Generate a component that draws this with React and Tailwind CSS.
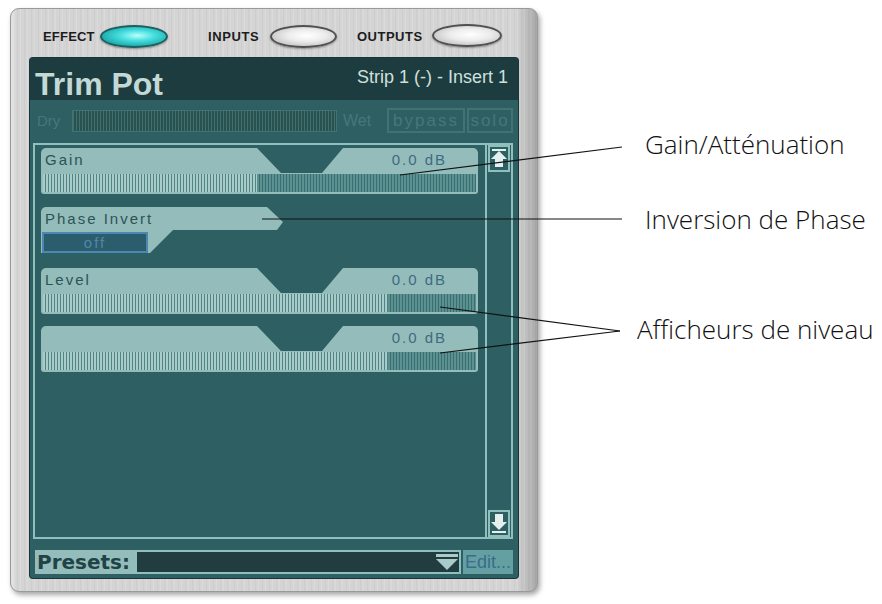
import React from "react";

const LIB = "font-['Liberation_Sans',Arial,sans-serif]";

function ScrollArrow({ dir }) {
  return (
    <div className="ml-[1px] w-[22px] h-[27px] border-2 border-[#8fc0be] flex items-center justify-center">
      <svg width="16" height="21" viewBox="0 0 16 21">
        {dir === "up" ? (
          <g fill="#e4efee">
            <rect x="1" y="1" width="14" height="2" />
            <polygon points="8,3 16,11 0,11" />
            <rect x="4" y="11" width="8" height="8" />
          </g>
        ) : (
          <g fill="#e4efee">
            <rect x="4" y="1" width="8" height="8" />
            <polygon points="0,9 16,9 8,17" />
            <rect x="1" y="18" width="14" height="2" />
          </g>
        )}
      </svg>
    </div>
  );
}

function Meter({ split }) {
  return (
    <div className="h-[21px] bg-[#94bcba] px-[2px] pt-[1px] pb-[2px] rounded-b-[3px] flex">
      <div
        className="h-full bg-[image:repeating-linear-gradient(90deg,#a9ccc9_0px,#a9ccc9_2px,#4f8385_2px,#4f8385_3px)]"
        style={{ width: split }}
      />
      <div className="h-full flex-1 bg-[image:repeating-linear-gradient(90deg,#5c9192_0px,#5c9192_2px,#3b6e70_2px,#3b6e70_3px)]" />
    </div>
  );
}

function SliderModule({ label, value, split, className = "" }) {
  return (
    <div className={`w-[437px] flex flex-col ${className}`}>
      <div
        className={`h-[25px] bg-[#94bcba] rounded-t-[5px] [clip-path:polygon(0_0,216px_0,240px_100%,281px_100%,302px_0,100%_0,100%_100%,0_100%)] flex justify-between items-start pt-[4px] pl-[4px] pr-[31px] text-[15px] leading-none tracking-[2px] ${LIB}`}
      >
        <span className="text-[#2c5356]">{label}</span>
        <span className="text-[#3f6b80]">{value}</span>
      </div>
      <Meter split={split} />
    </div>
  );
}

function PhaseModule() {
  return (
    <div
      className={`mt-[13px] w-[242px] h-[46px] bg-[#94bcba] rounded-tl-[5px] [clip-path:polygon(0_0,226px_0,242px_15px,236px_23px,132px_23px,109px_100%,0_100%)] flex flex-col ${LIB}`}
    >
      <div className="h-[25px] pt-[4px] pl-[4px] text-[15px] leading-none tracking-[2px] text-[#2c5356]">
        Phase Invert
      </div>
      <div className="ml-[1px] w-[106px] h-[21px] bg-[#2c5d6c] border-2 border-[#4a87b3] flex items-center justify-center text-[15px] leading-none tracking-[2px] text-[#4d88aa]">
        off
      </div>
    </div>
  );
}

function Oval({ active, className = "" }) {
  return (
    <div
      className={`h-[23px] rounded-[50%] border-2 shadow-[0_1px_2px_rgba(0,0,0,0.35)] ${
        active
          ? "border-[#1f5d5f] bg-[image:radial-gradient(ellipse_at_55%_45%,#b8ffff_0%,#47dede_35%,#1aa9ab_75%,#0f6f72_100%)]"
          : "border-[#505050] bg-[image:radial-gradient(ellipse_at_55%_45%,#ffffff_0%,#ececec_40%,#c4c4c4_78%,#8c8c8c_100%)]"
      } ${className}`}
    />
  );
}

export default function App() {
  return (
    <div className="relative w-[882px] h-[604px] bg-white overflow-hidden flex items-start">
      {/* Plugin window */}
      <div className="mt-[8px] ml-[10px] w-[528px] h-[584px] rounded-[9px] border border-[#9a9a9a] bg-[#d6d6d6] bg-[image:linear-gradient(90deg,rgba(255,255,255,0.35)_0px,rgba(255,255,255,0)_6px,rgba(0,0,0,0)_505px,rgba(0,0,0,0.22)_527px),repeating-linear-gradient(90deg,#dadada_0px,#cdcdcd_1px,#dedede_2px,#d0d0d0_4px,#d8d8d8_5px,#cacaca_7px)] shadow-[2px_3px_5px_rgba(0,0,0,0.35)] flex flex-col px-[19px] pb-[13px]">
        {/* header */}
        <div className={`h-[49px] flex items-start shrink-0 ${LIB}`}>
          <span className="mt-[21px] ml-[13px] w-[50px] text-[13px] leading-none font-bold text-[#1c1c1c] tracking-[0.2px]">
            EFFECT
          </span>
          <Oval active className="mt-[16px] ml-[7px] w-[68px]" />
          <span className="mt-[21px] ml-[40px] w-[52px] text-[13px] leading-none font-bold text-[#1c1c1c] tracking-[0.6px]">
            INPUTS
          </span>
          <Oval className="mt-[16px] ml-[10px] w-[67px]" />
          <span className="mt-[21px] ml-[20px] w-[68px] text-[13px] leading-none font-bold text-[#1c1c1c] tracking-[0.5px]">
            OUTPUTS
          </span>
          <Oval className="mt-[15px] ml-[7px] w-[70px]" />
        </div>

        {/* teal panel */}
        <div className="w-[488px] h-[520px] bg-[#2e5f63] rounded-[3px] shadow-[0_0_0_1px_#1a3537] flex flex-col shrink-0">
          {/* title */}
          <div className={`h-[42px] bg-[#1d3c3f] rounded-t-[3px] flex justify-between items-start pt-[10px] pl-[5px] pr-[10px] ${LIB}`}>
            <span className="text-[32px] leading-none font-bold text-[#c3d9d6]">Trim Pot</span>
            <span className="text-[18px] leading-none text-[#cfe0dd]">Strip 1 (-) - Insert 1</span>
          </div>

          {/* dry / wet */}
          <div className={`mt-[8px] h-[25px] flex items-center pl-[7px] text-[#46777a] ${LIB}`}>
            <span className="w-[30px] text-[15px] leading-none">Dry</span>
            <div className="ml-[5px] w-[265px] h-[22px] border border-[#437275] bg-[image:repeating-linear-gradient(90deg,#3f6f71_0px,#3f6f71_1px,#29524f_1px,#29524f_3px)]" />
            <span className="ml-[6px] w-[38px] text-[16px] leading-none">Wet</span>
            <div className="ml-[6px] w-[78px] h-[25px] border-2 border-[#437275] flex items-center justify-center text-[17px] leading-none tracking-[2px]">
              bypass
            </div>
            <div className="ml-[2px] w-[46px] h-[25px] border-2 border-[#437275] flex items-center justify-center text-[17px] leading-none tracking-[2px]">
              solo
            </div>
          </div>

          {/* content box */}
          <div className="mt-[10px] ml-[3px] w-[480px] h-[396px] border-2 border-[#8fc0be] flex">
            <div className="flex-1 pl-[6px] pt-[3px] flex flex-col">
              <SliderModule label="Gain" value="0.0 dB" split={214} />
              <PhaseModule />
              <SliderModule label="Level" value="0.0 dB" split={345} className="mt-[15px]" />
              <SliderModule label="" value="0.0 dB" split={345} className="mt-[12px]" />
            </div>
            <div className="w-[26px] border-l-2 border-[#8fc0be] flex flex-col justify-between">
              <ScrollArrow dir="up" />
              <ScrollArrow dir="down" />
            </div>
          </div>

          {/* presets */}
          <div className="mt-[11px] ml-[5px] h-[24px] flex">
            <div className="w-[100px] bg-[#94bcba] flex items-center pl-[2px] font-['DejaVu_Sans',Verdana,sans-serif] font-bold text-[20px] leading-none text-[#1f4346]">
              Presets:
            </div>
            <div className="w-[326px] bg-[#213d40] border-2 border-[#8fc0be] flex items-center justify-end pr-[1px]">
              <svg width="22" height="17" viewBox="0 0 22 17">
                <g fill="#a9cbc9">
                  <rect x="0" y="0" width="22" height="3" />
                  <polygon points="0,5 22,5 11,16" />
                </g>
              </svg>
            </div>
            <div className={`ml-[2px] w-[50px] bg-[#64a0a1] flex items-center justify-center text-[18px] leading-none text-[#3a6c8b] ${LIB}`}>
              Edit...
            </div>
          </div>
        </div>
      </div>

      {/* callout labels */}
      <div className="ml-[107px] pt-[131px] flex flex-col font-['Open_Sans',sans-serif] font-light text-[26px] leading-none text-[#111] whitespace-nowrap">
        <span>Gain/Atténuation</span>
        <span className="mt-[49px]">Inversion de Phase</span>
        <span className="mt-[84px] -ml-[8px]">Afficheurs de niveau</span>
      </div>

      {/* callout lines */}
      <svg className="absolute left-0 top-0 pointer-events-none" width="882" height="604" viewBox="0 0 882 604">
        <g stroke="#111" strokeWidth="1.2" fill="none">
          <line x1="400" y1="175" x2="622" y2="147" />
          <line x1="262" y1="219" x2="622" y2="219" />
          <line x1="440" y1="307" x2="620" y2="331" />
          <line x1="440" y1="353" x2="620" y2="331" />
        </g>
      </svg>
    </div>
  );
}
